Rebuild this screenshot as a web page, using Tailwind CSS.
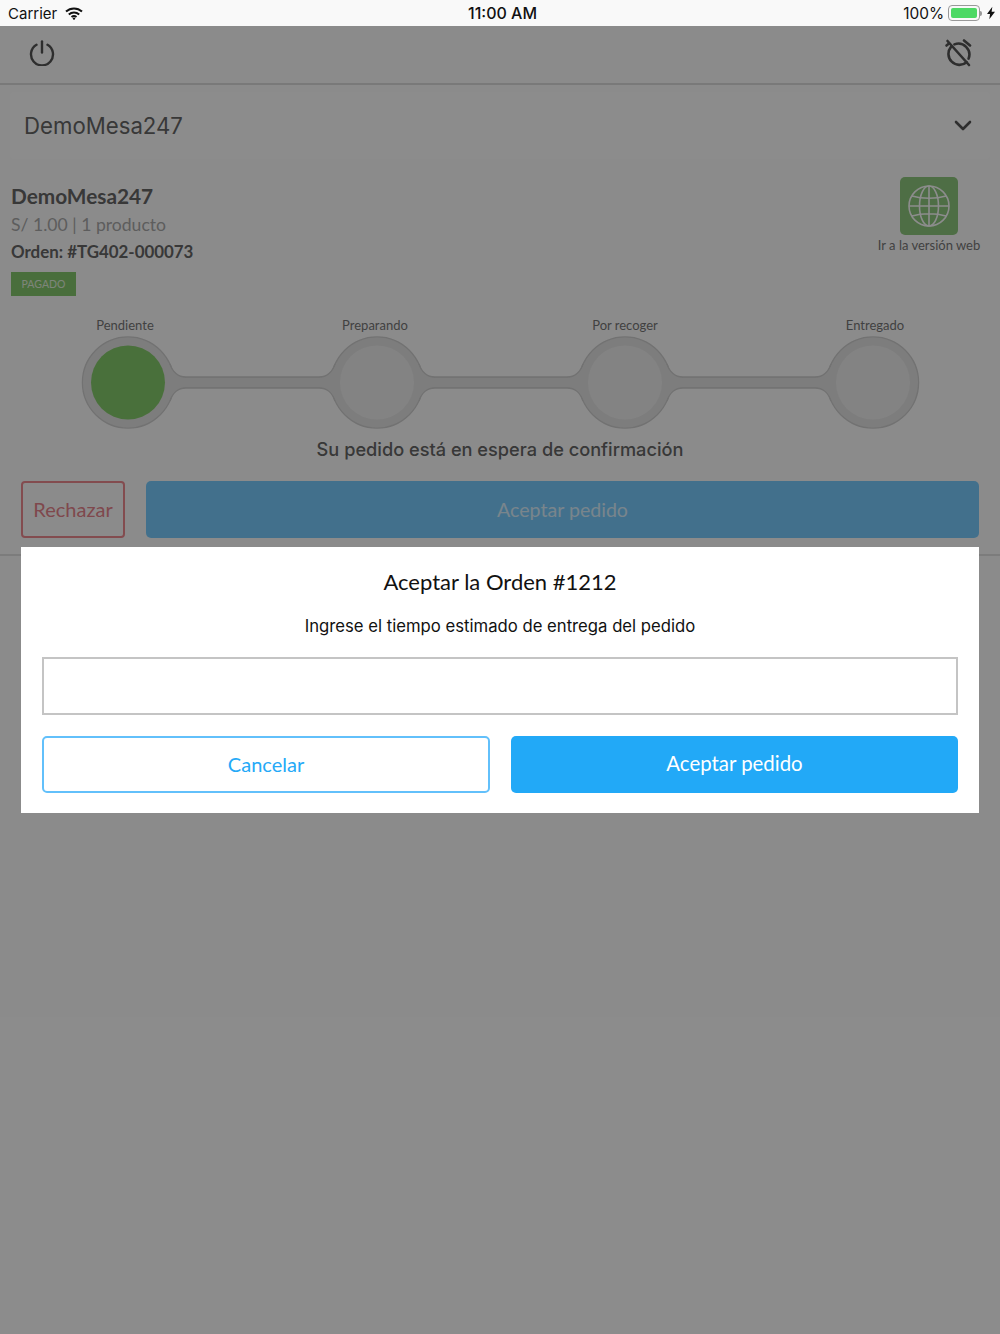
<!DOCTYPE html>
<html lang="es">
<head>
  <meta charset="UTF-8" />
  <title>Aceptar la Orden</title>
  <meta name="viewport" content="width=device-width, initial-scale=1" />
  <script src="https://cdn.jsdelivr.net/npm/@tailwindcss/browser@4"></script>
</head>
<body class="relative h-[1334px] w-[1000px] overflow-hidden bg-[#fefefe] font-['Lato',sans-serif]">

  <!-- Status bar -->
  <div class="relative z-20 flex h-[26px] items-center justify-between bg-[#f9f9f9] pt-[1px] pl-2 pr-[5px] font-['Inter',sans-serif] text-[15px] text-[#111]">
    <div class="flex items-center gap-2">
      <span class="pt-[1px]">Carrier</span>
      <svg width="18" height="13" viewBox="0 0 18 13" fill="none" stroke="#111" stroke-width="2">
        <path d="M1 4.6C5.6.4 12.4.4 17 4.6" />
        <path d="M3.8 7.4c3-2.7 7.4-2.7 10.4 0" />
        <path d="M6.5 10c1.5-1.2 3.5-1.2 5 0" />
        <circle cx="9" cy="11.6" r="1.2" fill="#111" stroke="none" />
      </svg>
    </div>
    <span class="absolute top-0 left-[468px] text-[16px] leading-[26px] font-medium">11:00 AM</span>
    <div class="flex items-center gap-[4px]">
      <span class="text-[15.4px]">100%</span>
      <div class="flex items-center">
        <div class="h-[16px] w-[32px] rounded-[4px] border border-[#999] p-[2px]">
          <div class="h-full w-full rounded-[2px] bg-[#4cd964]"></div>
        </div>
        <div class="h-[5px] w-[2px] rounded-r bg-[#999]"></div>
      </div>
      <svg class="ml-[1px]" width="8" height="14" viewBox="0 0 9 14"><path d="M6 0 0 8h3.4L2.6 14 9 5.6H5.2z" fill="#111" /></svg>
    </div>
  </div>

  <!-- Page behind the dialog -->
  <header class="flex h-[59px] items-center justify-between border-b-2 border-[#dcdcdc] pb-1 pl-[29px] pr-[28px]">
    <svg width="26" height="26" viewBox="0 0 26 26" fill="none" stroke="#555" stroke-width="2.4" stroke-linecap="round">
      <path d="M13 1.5v11" />
      <path d="M7.5 4.8a11 11 0 1 0 11 0" />
    </svg>
    <svg width="28" height="28" viewBox="0 0 28 28" fill="none" stroke="#555" stroke-width="2.6" stroke-linecap="round">
      <path d="M7 7.8a11 11 0 0 0 15.6 15.4M24.6 19.6A11 11 0 0 0 10.4 5.4" />
      <path d="M3.5 2 25 26" />
      <path d="M20 1.5l6 5" />
      <path d="M2.5 6.5l2.5-2" />
    </svg>
  </header>

  <div class="mx-[10px] mt-[7px] flex h-[67px] items-center justify-between rounded bg-[#ffffff] pl-[14px] pr-[18px] font-['Inter',sans-serif] text-[22.2px] text-[#666]">
    <span>DemoMesa247</span>
    <svg width="18" height="11" viewBox="0 0 18 11" fill="none" stroke="#555" stroke-width="2.6" stroke-linecap="round" stroke-linejoin="round"><path d="M2 2l7 7 7-7" /></svg>
  </div>

  <section class="flex justify-between pl-[11px] pr-[19px] pt-[22px]">
    <div>
      <h2 class="text-[20.8px] leading-[30px] font-bold text-[#666]">DemoMesa247</h2>
      <p class="text-[17.6px] leading-[28px] text-[#aaa]">S/ 1.00 | 1 producto</p>
      <p class="text-[16.9px] leading-[26px] font-bold text-[#666]">Orden: #TG402-000073</p>
      <span class="mt-[7px] flex h-[24px] w-[65px] items-center justify-center bg-[#86c96e] pt-[1px] text-[10.5px] text-[#e4f2df]">PAGADO</span>
    </div>
    <div class="-mt-[4px] flex w-[104px] flex-col items-center">
      <div class="flex h-[58px] w-[58px] items-center justify-center rounded-[5px] bg-[#8ec97e]">
        <svg width="44" height="44" viewBox="0 0 44 44" fill="none" stroke="#fff" stroke-width="1.6">
          <circle cx="22" cy="22" r="20" />
          <ellipse cx="22" cy="22" rx="9.5" ry="20" />
          <path d="M22 2v40M2 22h40M5 12c10 3 24 3 34 0M5 32c10-3 24-3 34 0" />
        </svg>
      </div>
      <span class="whitespace-nowrap text-[13px] leading-[20px] text-[#777]">Ir a la versión web</span>
    </div>
  </section>

  <!-- Order progress -->
  <div class="mt-[19px] grid grid-cols-4 text-center text-[13px] leading-[20px] text-[#777]">
    <span>Pendiente</span>
    <span>Preparando</span>
    <span>Por recoger</span>
    <span>Entregado</span>
  </div>
  <svg class="-mt-[2px] block" width="1000" height="98" viewBox="0 333 1000 98">
    <g fill="#d6d6d6" stroke="#cfcfcf" stroke-width="1.5">
      <circle cx="128" cy="382.5" r="45.5" />
      <circle cx="377" cy="382.5" r="45.5" />
      <circle cx="625" cy="382.5" r="45.5" />
      <circle cx="873" cy="382.5" r="45.5" />
      <path d="M170 364Q174 377 186 377H319Q331 377 335 364V401Q331 388 319 388H186Q174 388 170 401Z" />
      <path d="M419 364Q423 377 435 377H567Q579 377 583 364V401Q579 388 567 388H435Q423 388 419 401Z" />
      <path d="M667 364Q671 377 683 377H815Q827 377 831 364V401Q827 388 815 388H683Q671 388 667 401Z" />
    </g>
    <g fill="#e4e4e4" stroke="none">
      <circle cx="128" cy="382.5" r="45" />
      <circle cx="377" cy="382.5" r="45" />
      <circle cx="625" cy="382.5" r="45" />
      <circle cx="873" cy="382.5" r="45" />
      <path d="M168 362Q174 378 186 378H319Q331 378 337 362V403Q331 387 319 387H186Q174 387 168 403Z" />
      <path d="M417 362Q423 378 435 378H567Q579 378 585 362V403Q579 387 567 387H435Q423 387 417 403Z" />
      <path d="M665 362Q671 378 683 378H815Q827 378 833 362V403Q827 387 815 387H683Q671 387 665 403Z" />
    </g>
    <circle cx="128" cy="382.5" r="37" fill="#86cc6c" />
    <circle cx="377" cy="382.5" r="37" fill="#efefef" />
    <circle cx="625" cy="382.5" r="37" fill="#efefef" />
    <circle cx="873" cy="382.5" r="37" fill="#efefef" />
  </svg>
  <p class="mt-[6px] text-center font-['Inter',sans-serif] text-[18.2px] leading-[24px] font-medium text-[#666]">Su pedido está en espera de confirmación</p>

  <div class="mt-[20px] flex gap-[21px] px-[21px]">
    <button class="h-[57px] w-[104px] rounded-[4px] border-2 border-[#ee8a90] pb-[1px] text-[20px] text-[#e8848c]">Rechazar</button>
    <button class="h-[57px] flex-1 rounded-[5px] bg-[#79cdff] text-[19.6px] text-[#ddf2ff]">Aceptar pedido</button>
  </div>
  <div class="mt-[16px] border-t-2 border-[#e2e2e2]"></div>

  <!-- Dialog -->
  <div class="absolute inset-x-0 top-[26px] bottom-0 z-10 bg-black/45 px-[21px] pt-[521px]">
    <div class="h-[266px] bg-white px-[21px] pt-[20px]">
      <h3 class="text-center text-[22px] leading-[30px] text-[#111]">Aceptar la Orden #1212</h3>
      <p class="mt-[16px] text-center font-['Inter',sans-serif] text-[16.7px] leading-[26px] text-[#111]">Ingrese el tiempo estimado de entrega del pedido</p>
      <input class="mt-[18px] block h-[58px] w-full border-2 border-[#c4c4c4] bg-white" />
      <div class="mt-[21px] flex justify-between">
        <button class="h-[57px] w-[448px] rounded-[5px] border-2 border-[#62c0fb] pb-[2px] text-[20px] text-[#25a9f7]">Cancelar</button>
        <button class="h-[57px] w-[447px] rounded-[5px] bg-[#22a9f7] pb-[2px] text-[20.4px] text-white">Aceptar pedido</button>
      </div>
    </div>
  </div>
</body>
</html>
